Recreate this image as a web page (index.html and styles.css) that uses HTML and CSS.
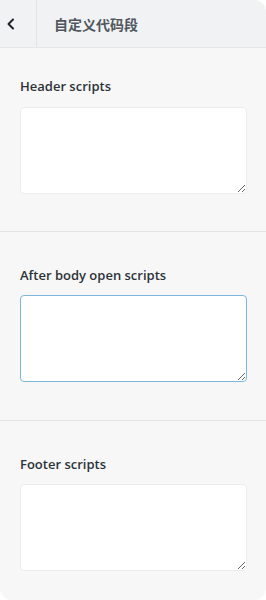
FILE: index.html
```html
<!DOCTYPE html>
<html lang="zh-CN">
<head>
    <title>自定义代码段</title>
    <meta charset="utf-8">
    <meta name="viewport" content="width=device-width,minimum-scale=1.0,maximum-scale=1.0,user-scalable=no">
    <link rel="stylesheet" href="styles.css">
</head>
<body>
<div class="panel">
    <div class="panel-head">
        <button class="back" type="button" aria-label="返回">
            <svg width="10" height="12" viewBox="0 0 10 12">
                <path d="M7 1.5 L2.5 6 L7 10.5" fill="none" stroke="#1d2327" stroke-width="2" stroke-linecap="round" stroke-linejoin="round"/>
            </svg>
        </button>
        <div class="head-title">自定义代码段</div>
    </div>
    <div class="section first">
        <label class="label" for="header-scripts">Header scripts</label>
        <textarea class="code" id="header-scripts"></textarea>
    </div>
    <div class="section">
        <label class="label" for="body-scripts">After body open scripts</label>
        <textarea class="code focus" id="body-scripts"></textarea>
    </div>
    <div class="section">
        <label class="label" for="footer-scripts">Footer scripts</label>
        <textarea class="code" id="footer-scripts"></textarea>
    </div>
</div>
</body>
</html>
```

FILE: styles.css
```css
html, body {
    margin: 0;
    padding: 0;
    background: #fff;
}
.panel {
    width: 266px;
    height: 600px;
    background: #f7f7f7;
    border-radius: 0 12px 12px 12px;
    overflow: hidden;
    font-family: "Open Sans", "Noto Sans", "Noto Sans CJK SC", sans-serif;
}
.panel-head {
    display: flex;
    align-items: stretch;
    height: 47px;
    background: #f1f2f3;
    border-bottom: 1px solid #e6e7e8;
}
.back {
    width: 37px;
    border: 0;
    border-right: 1px solid #e2e3e5;
    background: transparent;
    display: flex;
    align-items: center;
    justify-content: flex-start;
    padding: 0 0 0 6px;
}
.head-title {
    display: flex;
    align-items: center;
    padding-left: 17px;
    font-family: "Noto Sans CJK SC", sans-serif;
    font-size: 14px;
    font-weight: 700;
    color: #50575e;
}
.section {
    display: flex;
    flex-direction: column;
    padding: 33px 19px 38px 20px;
    border-top: 1px solid #e2e3e5;
}
.section.first {
    padding-top: 28px;
    padding-bottom: 37px;
    border-top: 0;
}
.label {
    line-height: 20px;
    font-size: 13px;
    font-weight: 600;
    color: #2c3338;
    margin-bottom: 10px;
}
.section.first .label {
    margin-bottom: 11px;
}
.code {
    box-sizing: border-box;
    width: 100%;
    height: 87px;
    margin: 0;
    background: #fff;
    border: 1px solid #ececed;
    border-radius: 4px;
    resize: vertical;
    outline: none;
}
.code.focus {
    border-color: #7db6dc;
}
```
